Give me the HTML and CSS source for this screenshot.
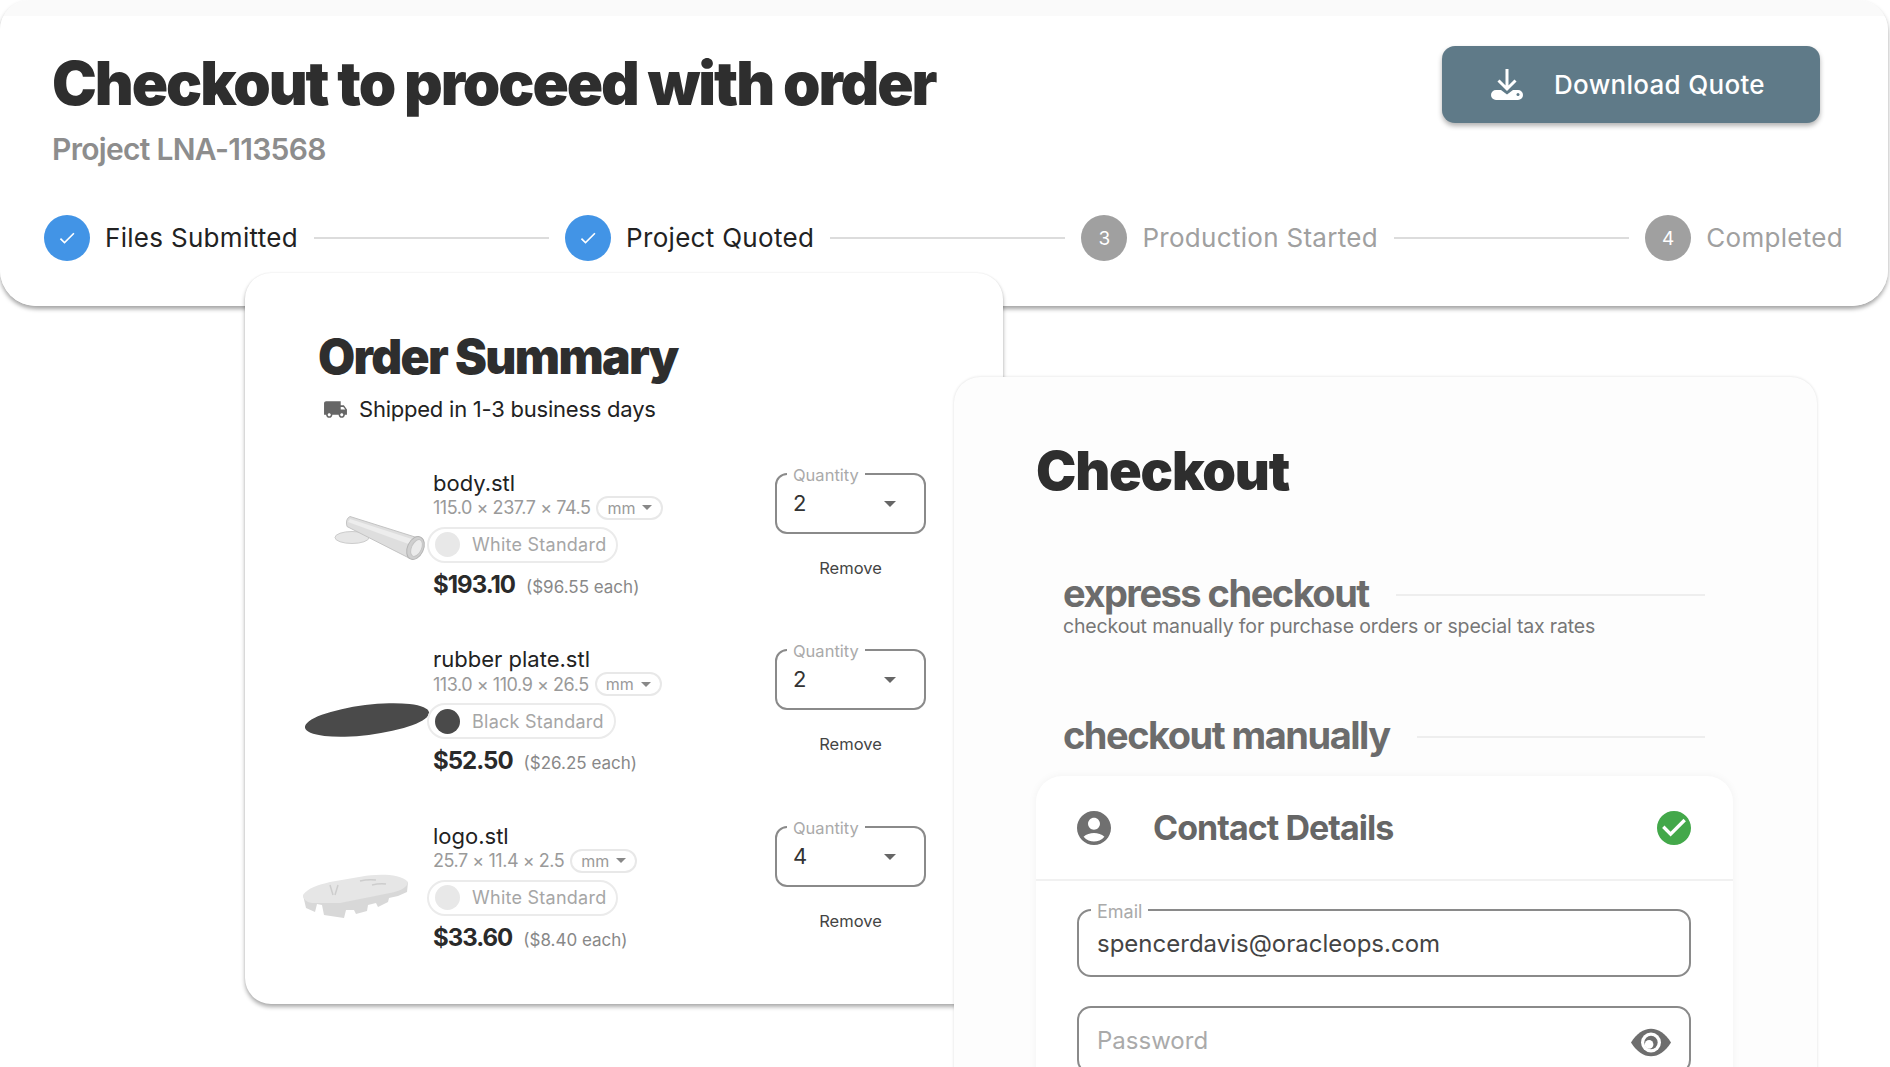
FILE: index.html
```html
<!DOCTYPE html>
<html lang="en">
<head>
<meta charset="utf-8">
<title>Checkout</title>
<link rel="stylesheet" href="styles.css">
</head>
<body>
<header class="top-card">
  <div class="top-row">
    <div>
      <h1 class="page-title">Checkout to proceed with order</h1>
      <p class="project">Project LNA-113568</p>
    </div>
    <button class="download">
      <svg class="download-icon" viewBox="0 0 32 31"><path d="M16 0V18M7.500 11.500 16 20l8.500-8.500" fill="none" stroke="#fff" stroke-width="3"/><path d="M5 21h5l6 4.500 6-4.500h5a5 5 0 0 1 0 10H5a5 5 0 0 1 0-10z" fill="#fff"/><circle cx="27" cy="25.500" r="1.500" fill="#5f7a88"/></svg>
      <span>Download Quote</span>
    </button>
  </div>
  <ol class="stepper">
    <li class="step done"><span class="step-dot"><svg class="step-check" viewBox="0 0 24 24"><path d="M9 16.170 4.830 12l-1.420 1.410L9 19 21 7l-1.410-1.410z"/></svg></span><span class="step-label">Files Submitted</span></li>
    <li class="step-line"></li>
    <li class="step done"><span class="step-dot"><svg class="step-check" viewBox="0 0 24 24"><path d="M9 16.170 4.830 12l-1.420 1.410L9 19 21 7l-1.410-1.410z"/></svg></span><span class="step-label">Project Quoted</span></li>
    <li class="step-line"></li>
    <li class="step"><span class="step-dot">3</span><span class="step-label">Production Started</span></li>
    <li class="step-line"></li>
    <li class="step"><span class="step-dot">4</span><span class="step-label">Completed</span></li>
  </ol>
</header>

<main class="stage">
  <section class="order-card">
    <h2 class="order-title">Order Summary</h2>
    <p class="shipping">
      <svg class="truck" viewBox="0 0 24 24"><path d="M20 8h-3V4H3c-1.100 0-2 .9-2 2v11h2c0 1.660 1.340 3 3 3s3-1.340 3-3h6c0 1.660 1.340 3 3 3s3-1.340 3-3h2v-5l-3-4zM6 18.500c-.83 0-1.500-.67-1.500-1.500s.67-1.500 1.500-1.500 1.500.67 1.500 1.500-.67 1.500-1.500 1.500zm13.500-9 1.960 2.500H17V9.500h2.500zm-1.500 9c-.83 0-1.500-.67-1.500-1.500s.67-1.500 1.500-1.500 1.500.67 1.500 1.500-.67 1.500-1.500 1.500z"/></svg>
      <span>Shipped in 1-3 business days</span>
    </p>

    <article class="item">
      <div class="thumb">
        <svg class="thumb-art" viewBox="0 0 133 110">
          <ellipse cx="52" cy="67.500" rx="17" ry="6" fill="#e6e6e6" stroke="#cccccc"/>
          <path d="M50 46.500 L123 69.500 L110 88.500 L47 56.500 Q45 49 50 46.500 Z" fill="#dedede" stroke="#c4c4c4"/>
          <path d="M50 49 L118 71 L114 76 L48 52 Z" fill="#ededed"/>
          <ellipse cx="115.500" cy="78" rx="8" ry="12" transform="rotate(25 115.500 78)" fill="#cfcfcf" stroke="#b4b4b4"/>
          <ellipse cx="116.500" cy="78" rx="5" ry="9" transform="rotate(25 116.500 78)" fill="#ebebeb" stroke="#c4c4c4"/>
        </svg>
      </div>
      <div class="info">
        <h3 class="file-name">body.stl</h3>
        <div class="dims"><span>115.0 × 237.7 × 74.5</span><span class="unit">mm<i class="mini-caret"></i></span></div>
        <div class="material"><i class="swatch swatch-white"></i><span>White Standard</span></div>
        <p class="price"><strong>$193.10</strong><span>($96.55 each)</span></p>
      </div>
      <div class="actions">
        <div class="qty"><span class="qty-label">Quantity</span><span class="qty-value">2</span><i class="caret"></i></div>
        <button class="remove">Remove</button>
      </div>
    </article>

    <article class="item">
      <div class="thumb">
        <svg class="thumb-art" viewBox="0 0 133 110">
          <ellipse cx="67" cy="74" rx="62.500" ry="15" transform="rotate(-7 67 74)" fill="#4a4a4a"/>
        </svg>
      </div>
      <div class="info">
        <h3 class="file-name">rubber plate.stl</h3>
        <div class="dims"><span>113.0 × 110.9 × 26.5</span><span class="unit">mm<i class="mini-caret"></i></span></div>
        <div class="material"><i class="swatch swatch-black"></i><span>Black Standard</span></div>
        <p class="price"><strong>$52.50</strong><span>($26.25 each)</span></p>
      </div>
      <div class="actions">
        <div class="qty"><span class="qty-label">Quantity</span><span class="qty-value">2</span><i class="caret"></i></div>
        <button class="remove">Remove</button>
      </div>
    </article>

    <article class="item">
      <div class="thumb">
        <svg class="thumb-art" viewBox="0 0 133 110">
          <path d="M3 72 L6 85 L15 89 L17 81 L22 82 L24 92 L44 95 L46 87 L54 87 L56 91 L67 88 L68 82 L76 80 L78 84 L88 79 L89 75 L98 73 L107 69 L108 59 Z" fill="#d8d8d8"/>
          <path d="M3 72 C8 65 18 62 30 59 L62 53.500 C75 51 100 50 108 59 C107 65 100 68 90 70 L40 80 L12 80 C6 79 3 76 3 72 Z" fill="#e6e6e6"/>
          <path d="M30 62l3 10M38 62l-3 10M60 58q8-2 16-1M72 62q8-2 14-1" fill="none" stroke="#cdcdcd" stroke-width="1.500"/>
        </svg>
      </div>
      <div class="info">
        <h3 class="file-name">logo.stl</h3>
        <div class="dims"><span>25.7 × 11.4 × 2.5</span><span class="unit">mm<i class="mini-caret"></i></span></div>
        <div class="material"><i class="swatch swatch-white"></i><span>White Standard</span></div>
        <p class="price"><strong>$33.60</strong><span>($8.40 each)</span></p>
      </div>
      <div class="actions">
        <div class="qty"><span class="qty-label">Quantity</span><span class="qty-value">4</span><i class="caret"></i></div>
        <button class="remove">Remove</button>
      </div>
    </article>
  </section>

  <section class="checkout-card">
    <h2 class="checkout-title">Checkout</h2>
    <div class="section-head express"><h3>express checkout</h3><i class="rule"></i></div>
    <p class="section-note">checkout manually for purchase orders or special tax rates</p>
    <div class="section-head manual"><h3>checkout manually</h3><i class="rule"></i></div>

    <div class="contact">
      <div class="contact-head">
        <svg class="contact-icon" viewBox="2 2 20 20"><path d="M12 2C6.480 2 2 6.480 2 12s4.480 10 10 10 10-4.480 10-10S17.520 2 12 2zm0 4c1.930 0 3.500 1.570 3.500 3.500S13.930 13 12 13s-3.500-1.570-3.500-3.500S10.070 6 12 6zm0 14c-2.030 0-4.430-.82-6.140-2.880C7.550 15.800 9.680 15 12 15s4.450.8 6.140 2.120C16.430 19.180 14.030 20 12 20z"/></svg>
        <h3>Contact Details</h3>
        <svg class="contact-ok" viewBox="2 2 20 20"><path d="M12 2C6.480 2 2 6.480 2 12s4.480 10 10 10 10-4.480 10-10S17.520 2 12 2zm-2 15-5-5 1.410-1.410L10 14.170l7.590-7.590L19 8l-9 9z"/></svg>
      </div>
      <div class="contact-body">
        <div class="field"><span class="field-label">Email</span><span class="field-value">spencerdavis@oracleops.com</span></div>
        <div class="field"><span class="field-placeholder">Password</span>
          <svg class="eye" viewBox="0 0 42 29"><path d="M0 14.500C6 5 13 0 21 0s15 5 21 14.500C36 24 29 29 21 29S6 24 0 14.500z" fill="#6e6e6e"/><circle cx="21" cy="14.500" r="10.500" fill="#fff"/><circle cx="21" cy="14.500" r="7" fill="#6e6e6e"/><circle cx="19" cy="16.500" r="4.500" fill="#fff"/></svg>
        </div>
      </div>
    </div>
  </section>
</main>
</body>
</html>
```

FILE: styles.css
```css
* { box-sizing: border-box; }
html, body { margin: 0; height: 1067px; overflow: hidden; background: #fff; }
body { font-family: Inter, "Noto Sans", sans-serif; color: #222; }
h1, h2, h3, p, ol { margin: 0; padding: 0; }
i { display: block; }

.top-card {
  width: 1888px;
  height: 306px;
  padding: 46px 45px 0 44px;
  background: linear-gradient(#fafafa 16px, #fff 16px);
  border-radius: 30px 30px 36px 36px;
  box-shadow: 0 3px 4px rgba(0,0,0,.36);
}
.top-row { display: flex; justify-content: space-between; align-items: flex-start; height: 169px; padding-left: 8px; padding-right: 23px; }
.page-title { font-size: 60px; line-height: 74px; font-weight: 900; letter-spacing: -2.050px; color: #2e2e2e; }
.project { font-size: 30px; line-height: 40px; font-weight: 600; letter-spacing: -.7px; color: #8d8d8d; margin-top: 9px; }
.download {
  display: flex; align-items: center; width: 378px; height: 77px; padding: 0 0 0 49px;
  background: #5f7a88; color: #fff; border: 0; border-radius: 13px;
  font: 500 26px Inter, sans-serif; letter-spacing: .3px;
  box-shadow: 0 3px 5px rgba(0,0,0,.3);
}
.download-icon { width: 32px; height: 31px; margin-right: 31px; }

.stepper { display: flex; align-items: center; list-style: none; height: 46px; }
.step { display: flex; align-items: center; gap: 15px; color: #a0a0a0; font-size: 26px; letter-spacing: .3px; white-space: nowrap; }
.step.done { color: #222; }
.step-label { margin-top: -2px; }
.step-dot { width: 46px; height: 46px; border-radius: 50%; background: #a0a0a0; color: #fff; font-size: 19px; letter-spacing: 0; display: flex; align-items: center; justify-content: center; }
.done .step-dot { background: #4294e6; }
.step-check { width: 20px; height: 20px; fill: #fff; }
.step-line { flex: 1; height: 2px; background: #dcdcdc; margin: 0 16px; }

.stage { display: flex; align-items: flex-start; margin-top: -33px; padding-left: 245px; }
.order-card {
  position: relative;
  flex: none; width: 758px; height: 731px; padding: 56px 77px 0 55px;
  background: #fff; border-radius: 26px;
  box-shadow: 0 3px 4px rgba(0,0,0,.32), 0 0 2px rgba(0,0,0,.08);
}
.order-title { font-size: 48px; line-height: 56px; font-weight: 900; letter-spacing: -1.670px; color: #2e2e2e; margin-left: 18px; }
.shipping { display: flex; align-items: center; gap: 11px; margin: 10px 0 46.500px 23px; font-size: 22px; line-height: 28px; letter-spacing: -.23px; }
.truck { width: 25px; height: 25px; fill: #666; }

.item { display: flex; height: 176.500px; }
.thumb { width: 133px; height: 110px; flex: none; }
.thumb-art { display: block; width: 133px; height: 110px; overflow: visible; }
.info { flex: 1; }
.file-name { font-size: 22px; line-height: 26px; font-weight: 400; color: #222; }
.dims { display: flex; align-items: center; gap: 6px; height: 24px; font-size: 18px; color: #9a9a9a; letter-spacing: -.45px; }
.unit { display: flex; align-items: center; gap: 7px; height: 24px; padding: 0 9px; border: 2px solid #e8e8e8; border-radius: 13px; font-size: 16px; letter-spacing: 0; }
.mini-caret { width: 0; height: 0; border: 5px solid transparent; border-top: 5px solid #888; border-bottom: 0; }
.material {
  display: inline-flex; align-items: center; gap: 12px; height: 36px; margin: 7px 0 0 -6px; padding: 0 10px 0 6px;
  border: 2px solid #ebebeb; border-radius: 18px; font-size: 18px; color: #a6a6a6; letter-spacing: .25px;
}
.swatch { width: 25px; height: 25px; border-radius: 50%; }
.swatch-white { background: #e8e8e8; }
.swatch-black { background: #4a4a4a; }
.price { display: flex; align-items: baseline; gap: 11px; margin-top: 7px; line-height: 30px; font-size: 17px; color: #888; }
.price strong { font-size: 24px; font-weight: 700; color: #2a2a2a; letter-spacing: -1px; }

.actions { width: 151px; flex: none; padding-top: 3px; display: flex; flex-direction: column; align-items: center; }
.qty { position: relative; width: 151px; height: 61px; border: 2px solid #8a8a8a; border-radius: 12px; padding: 14px 0 0 16px; }
.qty-label { position: absolute; left: 10px; top: -10px; padding: 0 6px; background: #fff; font-size: 16.500px; line-height: 20px; color: #aaa; }
.qty-value { font-size: 22px; line-height: 28px; color: #333; }
.caret { position: absolute; right: 28px; top: 26px; width: 0; height: 0; border: 6.500px solid transparent; border-top: 6.500px solid #666; border-bottom: 0; }
.remove { margin-top: 23px; height: 22px; padding: 0; background: none; border: 0; font: 400 16.500px/22px Inter, sans-serif; color: #444; }

.checkout-card {
  position: relative;
  flex: none; width: 863px; height: 800px; margin: 104px 0 0 -49px; padding: 62px 84px 0 82px;
  background: #fdfdfd; border-radius: 26px;
  box-shadow: 0 0 3px rgba(0,0,0,.14);
}
.checkout-title { font-size: 54px; line-height: 64px; font-weight: 900; letter-spacing: -1.200px; color: #2e2e2e; }
.section-head { display: flex; align-items: center; gap: 27px; margin: 0 28px 0 27px; height: 46px; }
.section-head h3 { font-size: 38px; font-weight: 700; letter-spacing: -1.500px; color: #6c6c6c; white-space: nowrap; }
.rule { flex: 1; height: 2px; background: #eee; margin-top: 4px; }
.express { margin-top: 67px; }
.manual { margin-top: 73px; }
.section-note { margin: -3px 0 0 27px; font-size: 19.500px; line-height: 26px; color: #777; letter-spacing: -.15px; }

.contact { margin-top: 18px; height: 400px; background: #fff; border-radius: 26px; box-shadow: 0 0 8px rgba(0,0,0,.05); }
.contact-head { display: flex; align-items: center; height: 105px; padding: 0 42px 0 41px; border-bottom: 2px solid #f1f1f1; }
.contact-icon { width: 34px; height: 34px; fill: #707070; margin-right: 42px; }
.contact-head h3 { flex: 1; font-size: 34px; font-weight: 700; letter-spacing: -.95px; color: #666; }
.contact-ok { width: 34px; height: 34px; fill: #43a84a; }
.contact-body { padding: 28px 42px 0 41px; display: flex; flex-direction: column; gap: 29px; }
.field { position: relative; display: flex; align-items: center; justify-content: space-between; height: 68px; padding: 0 18px 0 18px; border: 2px solid #8a8a8a; border-radius: 14px; background: #fff; font-size: 24px; letter-spacing: 0; }
.field-label { position: absolute; left: 12px; top: -10px; padding: 0 6px; background: #fff; font-size: 18px; line-height: 22px; color: #aaa; letter-spacing: 0; }
.field-value { color: #444; }
.field-placeholder { color: #aaa; }
.eye { width: 40px; height: 29px; margin-top: 4px; }
```
